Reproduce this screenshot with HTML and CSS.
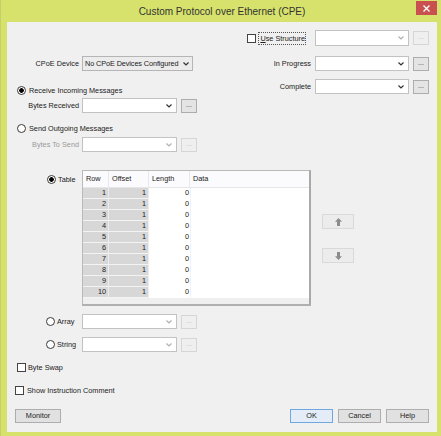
FILE: index.html
```html
<!DOCTYPE html>
<html>
<head>
<meta charset="utf-8">
<link rel="stylesheet" href="styles.css">
</head>
<body>
<div class="window">
  <div class="titlebar">
    <span></span>
    <span class="title">Custom Protocol over Ethernet (CPE)</span>
    <span class="close"><svg width="7" height="7" viewBox="0 0 7 7"><path d="M0.5 0.5L6.5 6.5M6.5 0.5L0.5 6.5" stroke="#fff" stroke-width="1.3"/></svg></span>
  </div>
  <div class="content">
    <div class="top">
      <div class="left">
        <div class="field">
          <span class="lbl">CPoE Device</span>
          <div class="combo w111"><span>No CPoE Devices Configured</span><svg class="chev" width="6" height="4" viewBox="0 0 6 4"><path d="M0.5 0.5L3 3L5.5 0.5" fill="none" stroke="#333" stroke-width="1.2"/></svg></div>
        </div>
        <div class="opt receive"><span class="radio on"></span><span>Receive Incoming Messages</span></div>
        <div class="field gap3">
          <span class="lbl">Bytes Received</span>
          <div class="combo w95"><span></span><svg class="chev" width="6" height="4" viewBox="0 0 6 4"><path d="M0.5 0.5L3 3L5.5 0.5" fill="none" stroke="#333" stroke-width="1.2"/></svg></div>
          <span class="ell">...</span>
        </div>
        <div class="opt send"><span class="radio"></span><span>Send Outgoing Messages</span></div>
        <div class="field gap4 disabled">
          <span class="lbl">Bytes To Send</span>
          <div class="combo w95"><span></span><svg class="chev" width="6" height="4" viewBox="0 0 6 4"><path d="M0.5 0.5L3 3L5.5 0.5" fill="none" stroke="#b0b0b0" stroke-width="1.2"/></svg></div>
          <span class="ell">...</span>
        </div>
      </div>
      <div class="right">
        <div class="rrow struct">
          <span class="check"></span>
          <span class="focus"><u>U</u>se Structure</span>
          <div class="combo w94 dis"><span></span><svg class="chev" width="6" height="4" viewBox="0 0 6 4"><path d="M0.5 0.5L3 3L5.5 0.5" fill="none" stroke="#b0b0b0" stroke-width="1.2"/></svg></div>
          <span class="ell dis">...</span>
        </div>
        <div class="rrow progress">
          <span class="rlbl">In Progress</span>
          <div class="combo w94"><span></span><svg class="chev" width="6" height="4" viewBox="0 0 6 4"><path d="M0.5 0.5L3 3L5.5 0.5" fill="none" stroke="#333" stroke-width="1.2"/></svg></div>
          <span class="ell">...</span>
        </div>
        <div class="rrow complete">
          <span class="rlbl">Complete</span>
          <div class="combo w94"><span></span><svg class="chev" width="6" height="4" viewBox="0 0 6 4"><path d="M0.5 0.5L3 3L5.5 0.5" fill="none" stroke="#333" stroke-width="1.2"/></svg></div>
          <span class="ell">...</span>
        </div>
      </div>
    </div>

    <div class="tsec">
      <div class="side">
        <div class="opt tableopt"><span class="radio on"></span><span>Table</span></div>
      </div>
      <div class="grid">
        <div class="gh">Row</div><div class="gh">Offset</div><div class="gh">Length</div><div class="gh last">Data</div>
        <div class="gc g">1</div><div class="gc g">1</div><div class="gc w">0</div><div class="gc d"></div>
        <div class="gc g">2</div><div class="gc g">1</div><div class="gc w">0</div><div class="gc d"></div>
        <div class="gc g">3</div><div class="gc g">1</div><div class="gc w">0</div><div class="gc d"></div>
        <div class="gc g">4</div><div class="gc g">1</div><div class="gc w">0</div><div class="gc d"></div>
        <div class="gc g">5</div><div class="gc g">1</div><div class="gc w">0</div><div class="gc d"></div>
        <div class="gc g">6</div><div class="gc g">1</div><div class="gc w">0</div><div class="gc d"></div>
        <div class="gc g">7</div><div class="gc g">1</div><div class="gc w">0</div><div class="gc d"></div>
        <div class="gc g">8</div><div class="gc g">1</div><div class="gc w">0</div><div class="gc d"></div>
        <div class="gc g">9</div><div class="gc g">1</div><div class="gc w">0</div><div class="gc d"></div>
        <div class="gc g">10</div><div class="gc g">1</div><div class="gc w">0</div><div class="gc d"></div>
      </div>
      <div class="arrows">
        <span class="abtn"><svg width="7" height="8" viewBox="0 0 7 8"><path d="M3.5 0L7 3.8H5V8H2V3.8H0Z" fill="#8c8c8c"/></svg></span>
        <span class="abtn"><svg width="7" height="8" viewBox="0 0 7 8"><path d="M3.5 8L7 4.2H5V0H2V4.2H0Z" fill="#8c8c8c"/></svg></span>
      </div>
    </div>

    <div class="arow first">
      <div class="side"><div class="opt"><span class="radio"></span><span>Array</span></div></div>
      <div class="combo w95"><span></span><svg class="chev" width="6" height="4" viewBox="0 0 6 4"><path d="M0.5 0.5L3 3L5.5 0.5" fill="none" stroke="#b0b0b0" stroke-width="1.2"/></svg></div>
      <span class="ell dis">...</span>
    </div>
    <div class="arow">
      <div class="side"><div class="opt"><span class="radio"></span><span>String</span></div></div>
      <div class="combo w95"><span></span><svg class="chev" width="6" height="4" viewBox="0 0 6 4"><path d="M0.5 0.5L3 3L5.5 0.5" fill="none" stroke="#b0b0b0" stroke-width="1.2"/></svg></div>
      <span class="ell dis">...</span>
    </div>

    <div class="cbrow swap"><span class="check"></span><span>Byte Swap</span></div>
    <div class="cbrow comment"><span class="check"></span><span>Show Instruction Comment</span></div>

    <div class="btns">
      <span class="btn monitor">Monitor</span>
      <span class="fill"></span>
      <span class="btn ok">OK</span>
      <span class="btn">Cancel</span>
      <span class="btn">Help</span>
    </div>
  </div>
</div>
</body>
</html>
```

FILE: styles.css
```css
html, body {
  margin: 0;
  padding: 0;
  background: #d6e26c;
}
body {
  font-family: "Liberation Sans", Arial, sans-serif;
  font-size: 7.3px;
  color: #222;
}
.window {
  width: 441px;
  height: 436px;
  box-sizing: border-box;
  background: #d6e26c;
  border-left: 1px solid #c4cf66;
  padding: 0 4px 4px 6px;
  display: flex;
  flex-direction: column;
}
.titlebar {
  height: 22px;
  flex: none;
  display: grid;
  grid-template-columns: 1fr auto 1fr;
  align-items: start;
}
.title {
  font-size: 10px;
  line-height: 23px;
  color: #333;
}
.close {
  justify-self: end;
  width: 21px;
  height: 14px;
  margin-top: 1px;
  background: #c9504f;
  display: flex;
  align-items: center;
  justify-content: center;
}
.content {
  flex: 1;
  background: #f0f0f0;
  display: flex;
  flex-direction: column;
}

/* top */
.top {
  display: flex;
  justify-content: space-between;
  height: 130px;
  flex: none;
}
.left {
  display: flex;
  flex-direction: column;
  padding-top: 34px;
}
.field {
  display: flex;
  align-items: center;
  height: 15px;
}
.field.gap3 { margin-top: 3px; }
.field.gap4 { margin-top: 4px; }
.lbl {
  width: 72px;
  text-align: right;
  margin-right: 3px;
  white-space: nowrap;
}
.disabled .lbl { color: #9a9a9a; }

.combo {
  height: 15px;
  box-sizing: border-box;
  border: 1px solid #c2c2c2;
  background: #fff;
  display: flex;
  align-items: center;
  justify-content: space-between;
  padding: 0 4px 0 2px;
  white-space: nowrap;
}
.combo.w111 {
  width: 111px;
  background: #ececec;
  border-color: #b5b5b5;
  padding: 0 3px 0 2px;
  letter-spacing: -0.1px;
}
.combo.w95 { width: 95px; }
.combo.w94 { width: 94px; }
.combo.dis { height: 16px; }

.ell {
  width: 16px;
  height: 14px;
  box-sizing: border-box;
  margin-left: 4px;
  border: 1px solid #adadad;
  background: #e4e4e4;
  color: #333;
  font-size: 7px;
  line-height: 10px;
  text-align: center;
}
.ell.dis, .disabled .ell {
  border-color: #d6d6d6;
  background: #efefef;
  color: #bbb;
}

.opt {
  display: flex;
  align-items: center;
  height: 10px;
  gap: 3px;
}
.opt.receive { margin-top: 14px; padding-left: 10px; }
.opt.send { margin-top: 10px; padding-left: 10px; }

.radio {
  width: 9px;
  height: 9px;
  box-sizing: border-box;
  border-radius: 50%;
  border: 1px solid #3a3a3a;
  background: #fff;
  flex: none;
}
.radio.on {
  background: radial-gradient(circle, #000 0 2px, #fff 2.6px);
}
.check {
  width: 9px;
  height: 9px;
  box-sizing: border-box;
  border: 1px solid #444;
  background: #fff;
  flex: none;
}

.right {
  display: flex;
  flex-direction: column;
  align-items: flex-end;
  padding-top: 8px;
  margin-right: 8px;
}
.rrow {
  display: flex;
  align-items: center;
  height: 16px;
}
.rrow.progress { margin-top: 10px; height: 15px; }
.rrow.complete { margin-top: 8px; height: 15px; }
.rrow .check { margin-right: 2px; }
.focus {
  border: 1px dotted #555;
  padding: 0 0 0 1px;
  line-height: 11px;
  margin-right: 9px;
}
.rlbl { margin-right: 4px; }

/* table section */
.tsec {
  display: flex;
  margin-top: 18px;
  flex: none;
}
.side {
  width: 75px;
  flex: none;
}
.tableopt {
  margin-top: 4px;
  padding-left: 40px;
  gap: 2px;
}
.grid {
  width: 229px;
  height: 136px;
  box-sizing: border-box;
  border: 1px solid #b9b9b9;
  border-right: 2px solid #a9a9a9;
  border-bottom: 2px solid #b0b0b0;
  background: #efefef;
  display: grid;
  grid-template-columns: 26px 40px 41px 1fr;
  grid-template-rows: 17px repeat(10, 11px);
  align-content: start;
}
.gh {
  background: #fbfbfd;
  border-right: 1px solid #e6eaf0;
  border-bottom: 1px solid #e6e6e6;
  padding-left: 3px;
  line-height: 16px;
  color: #222;
}
.gh.last { border-right: none; }
.gc {
  box-sizing: border-box;
  text-align: right;
  padding-right: 2px;
  line-height: 10px;
  border-bottom: 1px solid #f3f3f3;
}
.gc.g {
  background: #d7d7d7;
  border-right: 1px solid #ececec;
}
.gc.w {
  background: #fff;
  border-bottom-color: #fff;
  padding-right: 1px;
}
.gc.d {
  background: #fff;
  border-bottom-color: #fff;
  border-left: 1px solid #eef1f5;
}
.arrows {
  display: flex;
  flex-direction: column;
  gap: 19px;
  margin-left: 11px;
  padding-top: 44px;
}
.abtn {
  width: 32px;
  height: 15px;
  box-sizing: border-box;
  border: 1px solid #d9d9d9;
  background: #ececec;
  display: flex;
  align-items: center;
  justify-content: center;
}

/* array / string */
.arow {
  display: flex;
  align-items: center;
  height: 15px;
  margin-top: 8px;
  flex: none;
}
.arow .opt {
  padding-left: 39px;
  gap: 2px;
}

.cbrow {
  display: flex;
  align-items: center;
  height: 9px;
  gap: 2px;
  flex: none;
}
.cbrow.swap { margin-top: 11px; padding-left: 10px; }
.cbrow.comment { margin-top: 14px; padding-left: 8px; gap: 3px; }

.btns {
  display: flex;
  gap: 5px;
  margin-top: 14px;
  padding: 0 8px;
  flex: none;
}
.fill { flex: 1; }
.btn {
  width: 43px;
  height: 14px;
  box-sizing: border-box;
  border: 1px solid #adadad;
  background: #e1e1e1;
  text-align: center;
  line-height: 12px;
}
.btn.monitor { width: 46px; }
.btn.ok {
  border-color: #6fa8e0;
  background: #e4edf7;
}
```
